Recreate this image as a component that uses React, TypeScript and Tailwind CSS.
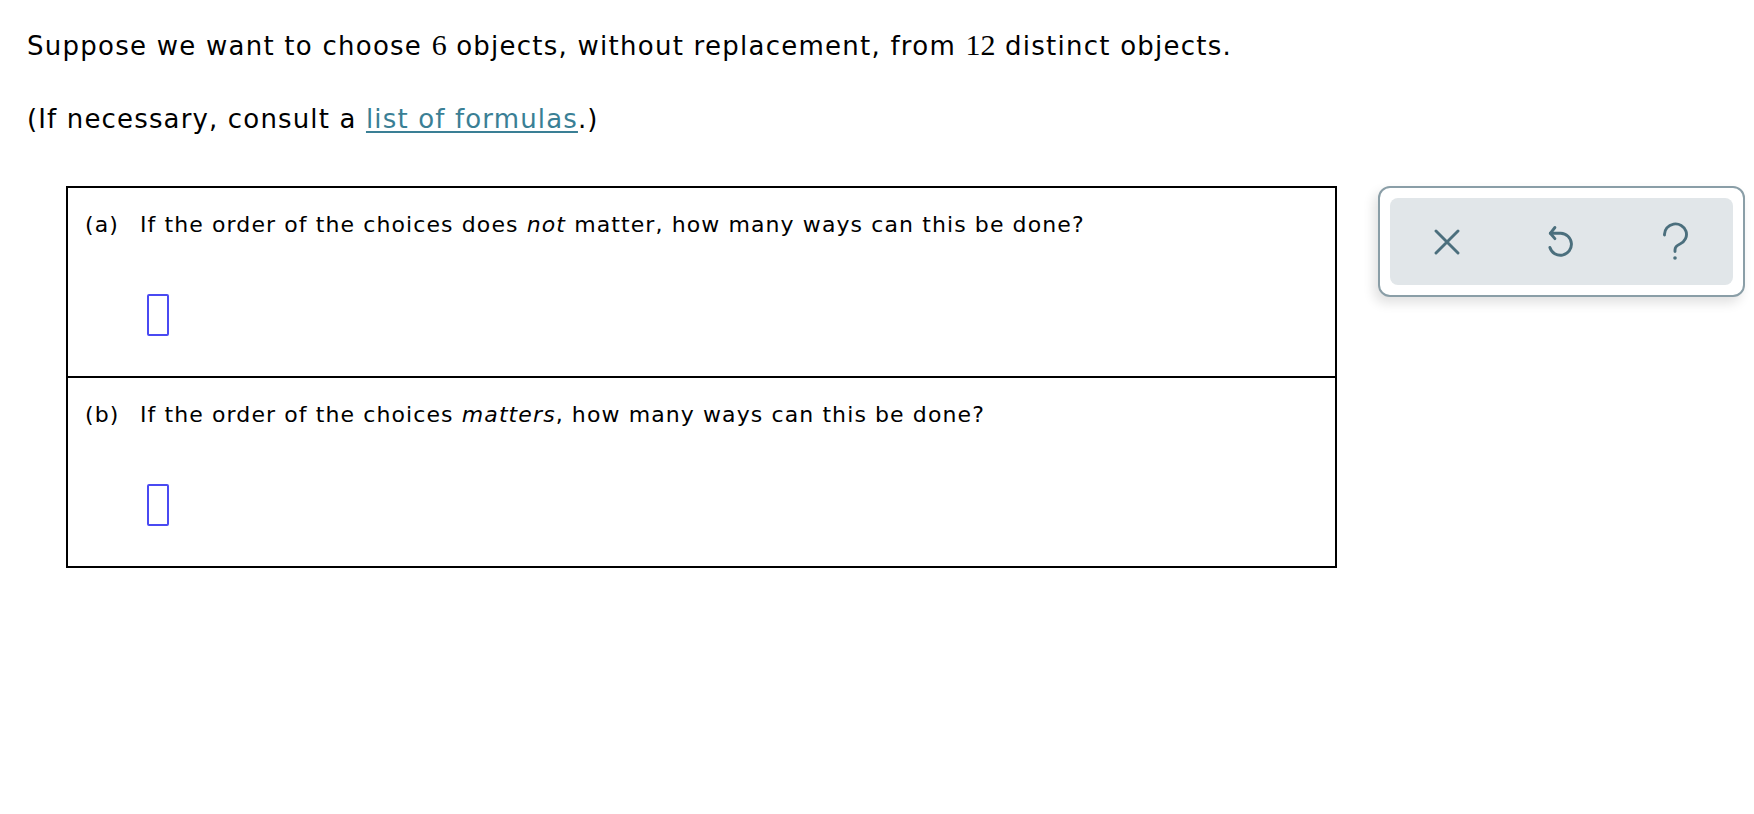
import React from "react";

function XIcon() {
  return (
    <svg width="26" height="26" viewBox="0 0 26 26" fill="none" stroke="#4b6f7d" strokeWidth="2.9" strokeLinecap="round">
      <path d="M2 2 L24 24 M24 2 L2 24" />
    </svg>
  );
}

function UndoIcon() {
  return (
    <svg width="30" height="36" viewBox="0 0 30 36" fill="none" stroke="#4b6f7d" strokeWidth="2.9" strokeLinecap="round" strokeLinejoin="round">
      <path d="M4.3 9.3 H14.7 A11 11 0 1 1 3.9 23.5" />
      <path d="M8.9 3.5 L4.3 9.3 L8.9 14.6" />
    </svg>
  );
}

function HelpIcon() {
  return (
    <svg width="28" height="40" viewBox="0 0 28 40" fill="none" stroke="#4b6f7d" strokeWidth="2.9" strokeLinecap="round" strokeLinejoin="round">
      <path d="M2.5 13 A11 10.5 0 1 1 18 22 C14.5 23.5 13 25 13 28 V29.5" />
      <circle cx="13" cy="36" r="1.8" fill="#4b6f7d" stroke="none" />
    </svg>
  );
}

function AnswerBox() {
  return <div className="w-[22px] h-[42px] border-2 border-[#4a4af2] rounded-[2px] bg-white" />;
}

export default function App() {
  return (
    <div className="w-[1754px] h-[814px] bg-white text-black font-['DejaVu_Sans','Verdana',sans-serif] overflow-hidden">
      <div className="pl-[27px] pt-[29px]">
        <p className="text-[26px] leading-[32px] tracking-[1.25px]">
          Suppose we want to choose{" "}
          <span className="font-['Liberation_Serif',serif] text-[30px] tracking-normal">6</span> objects, without replacement, from{" "}
          <span className="font-['Liberation_Serif',serif] text-[30px] tracking-normal">12</span> distinct objects.
        </p>
        <p className="text-[26px] leading-[32px] tracking-[1.15px] mt-[41px]">
          (If necessary, consult a{" "}
          <a className="text-[#3a7f95] underline underline-offset-[3px] decoration-[1.5px]">list of formulas</a>.)
        </p>
      </div>

      <div className="flex items-start ml-[66px] mt-[51px]">
        <div className="w-[1271px] border-2 border-black">
          <div className="h-[190px] border-b-2 border-black pl-[17px] pt-[22px]">
            <div className="flex text-[22px] leading-[30px] tracking-[1.1px]">
              <span className="w-[55px] shrink-0">(a)</span>
              <span>
                If the order of the choices does <i>not</i> matter, how many ways can this be done?
              </span>
            </div>
            <div className="ml-[62px] mt-[54px]">
              <AnswerBox />
            </div>
          </div>
          <div className="h-[188px] pl-[17px] pt-[22px]">
            <div className="flex text-[22px] leading-[30px] tracking-[1.1px]">
              <span className="w-[55px] shrink-0">(b)</span>
              <span>
                If the order of the choices <i>matters</i>, how many ways can this be done?
              </span>
            </div>
            <div className="ml-[62px] mt-[54px]">
              <AnswerBox />
            </div>
          </div>
        </div>

        <div className="ml-[41px] w-[367px] h-[111px] border-2 border-[#8a9ea7] rounded-[12px] bg-white p-[10px] shadow-[-4px_6px_12px_rgba(0,0,0,0.12)]">
          <div className="h-full rounded-[8px] bg-[#e1e6e9] grid grid-cols-3 items-center justify-items-center">
            <XIcon />
            <UndoIcon />
            <HelpIcon />
          </div>
        </div>
      </div>
    </div>
  );
}
